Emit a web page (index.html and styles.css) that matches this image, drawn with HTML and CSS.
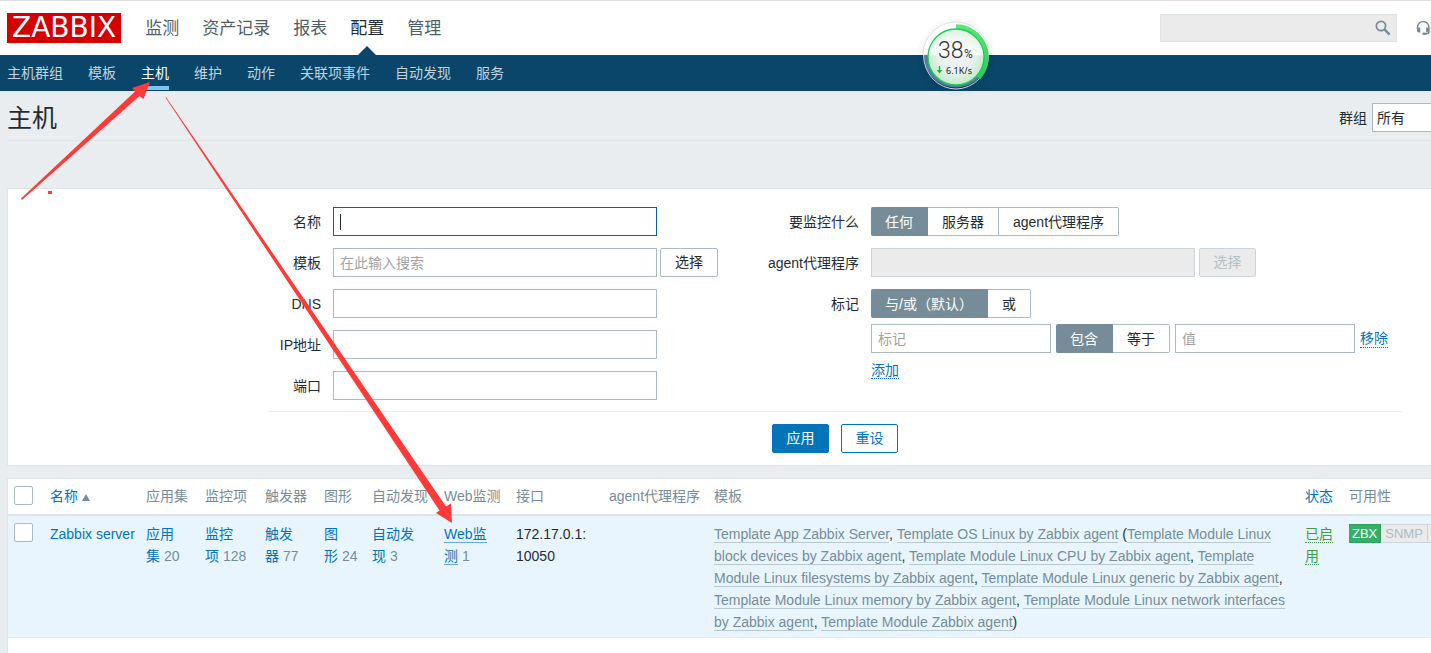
FILE: index.html
```html
<!DOCTYPE html>
<html lang="zh-CN">
<head>
<meta charset="utf-8">
<title>主机</title>
<link rel="stylesheet" href="styles.css">
</head>
<body>
<header class="top">
  <a class="logo" href="#">ZABBIX</a>
  <nav class="main-nav">
    <a href="#">监测</a>
    <a href="#">资产记录</a>
    <a href="#">报表</a>
    <a href="#" class="active">配置</a>
    <a href="#">管理</a>
  </nav>
  <form class="search">
    <input type="text" aria-label="搜索">
    <button type="button" aria-label="搜索">
      <svg width="16" height="16" viewBox="0 0 16 16"><circle cx="6" cy="6" r="4.6" fill="none" stroke="#768d99" stroke-width="1.8"/><path d="M9.4 9.4 14.6 14.6" stroke="#768d99" stroke-width="2.4"/></svg>
    </button>
  </form>
  <a class="support" href="#" aria-label="支持">
    <svg width="15" height="16" viewBox="0 0 15 16"><path d="M1.500 9V7.200a5.700 5.700 0 0 1 11.400 0v4.500q0 2-2 2H8.600" fill="none" stroke="#768d99" stroke-width="1.500"/><path d="M1 7.400h3.300v5H2.600Q1 12.400 1 10.800zM10.100 7.400h3.300v3.400q0 1.600-1.600 1.600h-1.700z" fill="#768d99"/><rect x="6.500" y="12.500" width="3.500" height="2.400" rx="1" fill="#768d99"/></svg>
  </a>
</header>
<nav class="sub-nav">
  <a href="#">主机群组</a>
  <a href="#">模板</a>
  <a href="#" class="active">主机</a>
  <a href="#">维护</a>
  <a href="#">动作</a>
  <a href="#">关联项事件</a>
  <a href="#">自动发现</a>
  <a href="#">服务</a>
</nav>
<main class="page">
  <div class="title-bar">
    <h1>主机</h1>
    <div class="group-pick">
      <label for="group">群组</label>
      <select id="group"><option>所有</option></select>
    </div>
  </div>

  <form class="panel filter">
    <div class="filter-cols">
      <div class="fields fields-left">
        <label for="f-name">名称</label>
        <div class="field"><input class="wide focused" id="f-name" type="text"></div>
        <label for="f-tpl">模板</label>
        <div class="field"><input class="wide" id="f-tpl" type="text" placeholder="在此输入搜索"><button class="btn" type="button">选择</button></div>
        <label for="f-dns">DNS</label>
        <div class="field"><input class="wide" id="f-dns" type="text"></div>
        <label for="f-ip">IP地址</label>
        <div class="field"><input class="wide" id="f-ip" type="text"></div>
        <label for="f-port">端口</label>
        <div class="field"><input class="wide" id="f-port" type="text"></div>
      </div>
      <div class="fields fields-right">
        <span class="label">要监控什么</span>
        <div class="segments">
          <input type="radio" name="mon" id="mon-any" checked><label for="mon-any">任何</label>
          <input type="radio" name="mon" id="mon-srv"><label for="mon-srv">服务器</label>
          <input type="radio" name="mon" id="mon-proxy"><label for="mon-proxy">agent代理程序</label>
        </div>
        <label for="f-proxy">agent代理程序</label>
        <div class="field"><input class="wide" id="f-proxy" type="text" disabled><button class="btn" type="button" disabled>选择</button></div>
        <span class="label">标记</span>
        <div class="tags">
          <div class="segments">
            <input type="radio" name="ev" id="ev-and" checked><label for="ev-and">与/或（默认）</label>
            <input type="radio" name="ev" id="ev-or"><label for="ev-or">或</label>
          </div>
          <div class="tag-row">
            <input class="short" type="text" placeholder="标记" aria-label="标记">
            <div class="segments">
              <input type="radio" name="op" id="op-has" checked><label for="op-has">包含</label>
              <input type="radio" name="op" id="op-eq"><label for="op-eq">等于</label>
            </div>
            <input class="short" type="text" placeholder="值" aria-label="值">
            <a class="action" href="#">移除</a>
          </div>
          <div class="add-row"><a class="action" href="#">添加</a></div>
        </div>
      </div>
    </div>
    <div class="filter-buttons">
      <button class="btn primary" type="button">应用</button>
      <button class="btn outline" type="button">重设</button>
    </div>
  </form>

  <div class="panel list">
    <table>
      <colgroup>
        <col class="c-check"><col class="c-name"><col class="c-apps"><col class="c-items"><col class="c-trig"><col class="c-graph"><col class="c-disc"><col class="c-web"><col class="c-if"><col class="c-proxy"><col><col class="c-status"><col class="c-avail">
      </colgroup>
      <thead>
        <tr>
          <th><input type="checkbox" aria-label="全选"></th>
          <th><a href="#">名称 <span class="sort"></span></a></th>
          <th>应用集</th>
          <th>监控项</th>
          <th>触发器</th>
          <th>图形</th>
          <th>自动发现</th>
          <th>Web监测</th>
          <th>接口</th>
          <th>agent代理程序</th>
          <th>模板</th>
          <th><a href="#">状态</a></th>
          <th>可用性</th>
        </tr>
      </thead>
      <tbody>
        <tr>
          <td><input type="checkbox" aria-label="Zabbix server"></td>
          <td class="nowrap"><a href="#">Zabbix server</a></td>
          <td class="count"><a href="#">应用集</a>&nbsp;20</td>
          <td class="count"><a href="#">监控项</a>&nbsp;128</td>
          <td class="count"><a href="#">触发器</a>&nbsp;77</td>
          <td class="count"><a href="#">图形</a>&nbsp;24</td>
          <td class="count"><a href="#">自动发现</a>&nbsp;3</td>
          <td class="count"><a class="hovered" href="#">Web监测</a>&nbsp;1</td>
          <td>172.17.0.1: 10050</td>
          <td></td>
          <td class="templates"><a href="#">Template App Zabbix Server</a>, <a href="#">Template OS Linux by Zabbix agent</a> (<a href="#">Template Module Linux block devices by Zabbix agent</a>, <a href="#">Template Module Linux CPU by Zabbix agent</a>, <a href="#">Template Module Linux filesystems by Zabbix agent</a>, <a href="#">Template Module Linux generic by Zabbix agent</a>, <a href="#">Template Module Linux memory by Zabbix agent</a>, <a href="#">Template Module Linux network interfaces by Zabbix agent</a>, <a href="#">Template Module Zabbix agent</a>)</td>
          <td><a class="enabled" href="#">已启用</a></td>
          <td class="avail"><div class="badges"><span class="on">ZBX</span><span>SNMP</span><span>JMX</span></div></td>
        </tr>
      </tbody>
    </table>
  </div>
</main>

<svg class="gauge" width="84" height="84" viewBox="0 0 84 84" role="img" aria-label="38% 6.1K/s">
  <defs>
    <radialGradient id="disc" cx="50%" cy="48%" r="52%">
      <stop offset="0" stop-color="#eff2f7"/><stop offset=".6" stop-color="#e8f1ee"/><stop offset="1" stop-color="#bfebc6"/>
    </radialGradient>
    <linearGradient id="shine" x1="0" y1="0" x2="0" y2="1">
      <stop offset="0" stop-color="#fff" stop-opacity=".3"/><stop offset=".46" stop-color="#fff" stop-opacity=".75"/><stop offset=".48" stop-color="#fff" stop-opacity="0"/>
    </linearGradient>
    <linearGradient id="arc" x1="0" y1="0" x2="0" y2="1">
      <stop offset="0" stop-color="#5ee572"/><stop offset="1" stop-color="#25cf5c"/>
    </linearGradient>
  </defs>
  <circle cx="42" cy="42" r="39" fill="#000" opacity=".02"/>
  <circle cx="42" cy="42" r="36" fill="#000" opacity=".02"/>
  <path d="M9 40a33 33 0 0 1 66 0z" fill="#fff" stroke="#e3e3e3"/>
  <path d="M9.500 40a32.500 32.500 0 0 0 65 0z" fill="#587b9c"/>
  <path d="M9.500 40a32.500 34 0 0 0 65 0" fill="none" stroke="#c4d0da"/>
  <path d="M42 11.500a30.500 30.500 0 0 1 22.200 51.400" fill="none" stroke="url(#arc)" stroke-width="4.500"/>
  <circle cx="42" cy="42" r="28" fill="url(#disc)"/>
  <circle cx="42" cy="42" r="28" fill="url(#shine)" stroke="#1fcb59" stroke-width="1.300"/>
  <text class="g-num" x="24" y="43">38</text>
  <text class="g-pct" x="50" y="43">%</text>
  <path d="M25.500 51v5" stroke="#13b53c" stroke-width="1.300"/><path d="M22.700 55h5.600l-2.800 3.500z" fill="#13b53c"/>
  <text class="g-rate" x="32" y="59">6.1K/s</text>
</svg>

<svg class="marks" width="470" height="540" viewBox="0 0 470 540" aria-hidden="true">
  <path d="M21 198.500 135 91.500 132 88 150 82 143.500 99 139.500 96 22 200z"/>
  <path d="M166 97 446 506.500 451 503.500 452 523 436 513 439.500 510.500 165.500 97.500z"/>
  <path d="M48 191h4v3h-4z"/>
</svg>
</body>
</html>
```
FILE: styles.css
```css
* { box-sizing: border-box; }

body {
  margin: 0;
  min-height: 100vh;
  display: flex;
  flex-direction: column;
  overflow-x: hidden;
  background: #e9edf0;
  color: #1f2c33;
  font: 14px/22px "Liberation Sans", "Noto Sans CJK SC", sans-serif;
}

a { color: #0275b8; text-decoration: none; }
input, select, button { font: inherit; color: inherit; }
button { cursor: pointer; }

/* Header */
.top {
  display: flex;
  align-items: center;
  height: 55px;
  padding-left: 7px;
  background: #fff;
  border-top: 1px solid #ddd;
}
.logo {
  padding: 0 5px;
  background: #d40000;
  color: #fff;
  font: 28px/30px "DejaVu Sans", sans-serif;
}
.main-nav { display: flex; gap: 23px; margin-left: 24px; align-self: stretch; }
.main-nav a {
  position: relative;
  font-size: 17px;
  line-height: 56px;
  color: #4f5f68;
}
.main-nav .active { color: #1f2c33; }
.main-nav .active::after {
  content: "";
  position: absolute;
  left: 50%;
  top: 45px;
  margin-left: -9px;
  border: 9px solid transparent;
  border-top: 0;
  border-bottom-color: #0a466a;
}
.search { position: relative; margin-left: auto; width: 237px; height: 28px; }
.search input {
  width: 100%;
  height: 28px;
  background: #ebebeb;
  border: 1px solid #dfe4e7;
}
.search button {
  position: absolute;
  right: 6px;
  top: 6px;
  height: 16px;
  padding: 0;
  border: 0;
  background: none;
}
.search svg, .support svg { display: block; }
.support { margin-left: 19px; }

.sub-nav {
  display: flex;
  gap: 25px;
  height: 36px;
  padding-left: 7px;
  background: #0a466a;
}
.sub-nav a { height: 35px; line-height: 36px; color: #c3d2dc; }
.sub-nav .active { color: #fff; border-bottom: 4px solid #7cc3f5; }

/* Page */
.page { flex: 1; display: flex; flex-direction: column; padding-left: 7px; }
.title-bar {
  display: flex;
  align-items: center;
  justify-content: space-between;
  height: 50px;
  padding-top: 4px;
  border-bottom: 1px solid #dfe4e7;
}
h1 { margin: 0; font-size: 25px; line-height: 36px; font-weight: 400; }
.group-pick { display: flex; align-items: center; gap: 5px; }
.group-pick select {
  appearance: none;
  width: 59px;
  height: 29px;
  padding: 0 4px;
  border: 1px solid #acbbc2;
  border-right: 0;
  border-radius: 0;
  background: #fff;
}
.panel {
  background: #fff;
  border: 1px solid #dfe4e7;
  border-right: 0;
}

/* Filter */
.filter { margin-top: 47px; padding: 18px 29px 12px 260px; }
.filter-cols { display: flex; gap: 48px; padding-bottom: 11px; border-bottom: 1px solid #ebeef0; }
.fields { display: grid; gap: 12px; align-content: start; }
.fields-left { grid-template-columns: 53px 385px; }
.fields-right { flex: 1; grid-template-columns: 93px 1fr; }
.fields > label, .label { text-align: right; line-height: 30px; height: 29px; white-space: nowrap; }
.field { display: flex; gap: 3px; }
.filter input[type="text"] {
  height: 29px;
  padding: 0 6px;
  border: 1px solid #acbbc2;
  background: #fff;
}
.filter input::placeholder { color: #a3a3a3; opacity: 1; }
.filter .wide { width: 324px; }
.filter .short { width: 180px; }
.filter input.focused {
  border-color: #0f6296;
  background: linear-gradient(#1f2c33, #1f2c33) 6px 6px / 1px 16px no-repeat #fff;
}
.filter input:disabled { background: #ebebeb; border-color: #ccd5d9; }
.btn {
  height: 29px;
  width: 58px;
  padding: 0;
  line-height: 27px;
  border: 1px solid #acbbc2;
  border-radius: 2px;
  background: #fff;
}
.btn:disabled { background: #ebebeb; border-color: #ccd5d9; color: #b5bfc4; margin-left: 1px; width: 57px; }
.btn.primary, .btn.outline { width: 57px; border-color: #0275b8; }
.btn.primary { background: #0275b8; color: #fff; }
.btn.outline { color: #0275b8; }

.segments { display: flex; }
.segments input { position: absolute; opacity: 0; pointer-events: none; }
.segments label {
  height: 29px;
  padding: 0 14px;
  line-height: 28px;
  border: 1px solid #acbbc2;
  border-left: 0;
  white-space: nowrap;
}
.segments input:checked + label {
  background: #768d99;
  border-color: #768d99;
  color: #fff;
}
.segments label:first-of-type { border-radius: 2px 0 0 2px; }
.segments label:last-of-type { border-radius: 0 2px 2px 0; }
.tags { display: flex; flex-direction: column; gap: 6px; }
.tag-row { display: flex; align-items: center; gap: 5px; }
.action { border-bottom: 1px dotted #0275b8; line-height: 18px; }
.filter-buttons { display: flex; justify-content: center; gap: 12px; margin-top: 12px; }

/* Host list */
.list { flex: 1; margin-top: 12px; border-bottom: 0; }
table { width: 100%; table-layout: fixed; border-collapse: collapse; }
.c-check { width: 37px; }
.c-name { width: 96px; }
.c-apps { width: 59px; }
.c-items { width: 60px; }
.c-trig { width: 59px; }
.c-graph { width: 48px; }
.c-disc { width: 72px; }
.c-web { width: 72px; }
.c-if { width: 93px; }
.c-proxy { width: 105px; }
.c-status { width: 44px; }
.c-avail { width: 87px; }
th {
  height: 36px;
  padding: 0 5px 2px;
  border-bottom: 2px solid #dce2e5;
  color: #768d99;
  font-weight: 400;
  text-align: left;
  white-space: nowrap;
}
td { padding: 7px 5px 4px; vertical-align: top; }
tbody tr { background: #e8f5ff; border-bottom: 1px solid #e3eaee; }
.nowrap { white-space: nowrap; }
.sort {
  display: inline-block;
  border: 4px solid transparent;
  border-top: 0;
  border-bottom: 7px solid #768d99;
}
input[type="checkbox"] {
  appearance: none;
  display: block;
  width: 19px;
  height: 19px;
  margin: 0 0 0 1px;
  border: 1px solid #acbbc2;
  border-radius: 2px;
  background: #fff;
}
.count { color: #768d99; }
.hovered { border-bottom: 1px solid #67addb; }
.templates { color: #1f2c33; }
.templates a { color: #768d99; border-bottom: 1px solid #b9c8d1; }
.enabled { color: #429e47; border-bottom: 1px dotted #429e47; }
.avail { overflow: hidden; }
.badges { display: flex; padding-top: 1px; font-size: 13px; }
.badges span {
  height: 19px;
  padding: 0 4px;
  line-height: 18px;
  border: 1px solid #ccd5d9;
  border-left: 0;
  background: #ebebeb;
  color: #acbbc2;
}
.badges .on { padding: 0 3px; background: #34af67; border-color: #2f9f5e; color: #fff; }

/* Floating overlays */
.gauge { position: absolute; left: 914px; top: 15px; font-family: "Noto Sans", sans-serif; }
.g-num { font: 300 23px Roboto, sans-serif; fill: #333; }
.g-pct { font: 12px Roboto, sans-serif; fill: #333; }
.g-rate { font-size: 9px; fill: #222; }
.marks { position: absolute; left: 0; top: 0; pointer-events: none; fill: #fe3b38; }
```
